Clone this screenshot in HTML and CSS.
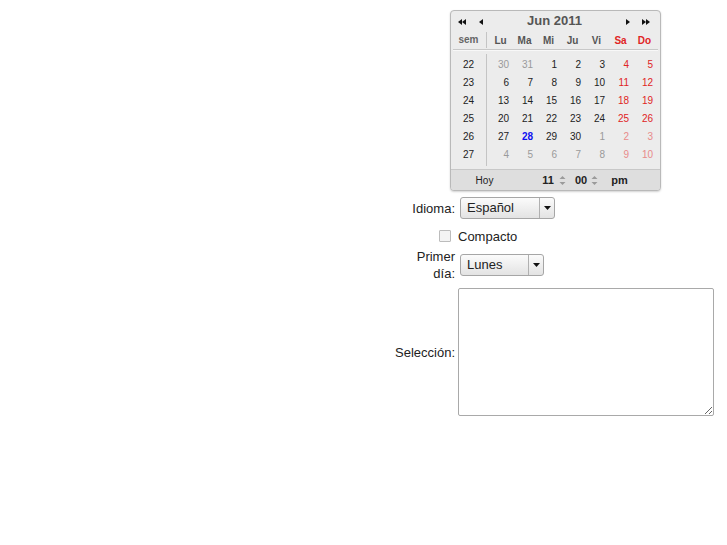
FILE: index.html
```html
<!DOCTYPE html>
<html lang="es">
<head>
<meta charset="utf-8">
<title>Calendario</title>
<link rel="stylesheet" href="styles.css">
</head>
<body>
<div class="form">
  <div class="cal">
    <div class="cal-title">
      <span class="nav nav-dbl"><svg width="8" height="6" viewBox="0 0 8 6"><polygon points="4,0 0,3 4,6" /><polygon points="8,0 4,3 8,6" /></svg></span>
      <span class="nav nav-prev"><svg width="4" height="6" viewBox="0 0 4 6"><polygon points="4,0 0,3 4,6" /></svg></span>
      <span class="title">Jun 2011</span>
      <span class="nav nav-next"><svg width="4" height="6" viewBox="0 0 4 6"><polygon points="0,0 4,3 0,6" /></svg></span>
      <span class="nav nav-dbl2"><svg width="8" height="6" viewBox="0 0 8 6"><polygon points="0,0 4,3 0,6" /><polygon points="4,0 8,3 4,6" /></svg></span>
    </div>
    <div class="cal-days">
      <span class="wk-h">sem</span>
      <span class="dn">Lu</span><span class="dn">Ma</span><span class="dn">Mi</span><span class="dn">Ju</span><span class="dn">Vi</span><span class="dn we">Sa</span><span class="dn we">Do</span>
    </div>
    <div class="cal-sep"></div>
    <div class="cal-body">
      <div class="wk-col">
        <span>22</span><span>23</span><span>24</span><span>25</span><span>26</span><span>27</span>
      </div>
      <div class="dates">
        <span class="o">30</span><span class="o">31</span><span>1</span><span>2</span><span>3</span><span class="we">4</span><span class="we">5</span>
        <span>6</span><span>7</span><span>8</span><span>9</span><span>10</span><span class="we">11</span><span class="we">12</span>
        <span>13</span><span>14</span><span>15</span><span>16</span><span>17</span><span class="we">18</span><span class="we">19</span>
        <span>20</span><span>21</span><span>22</span><span>23</span><span>24</span><span class="we">25</span><span class="we">26</span>
        <span>27</span><span class="today">28</span><span>29</span><span>30</span><span class="o">1</span><span class="o we">2</span><span class="o we">3</span>
        <span class="o">4</span><span class="o">5</span><span class="o">6</span><span class="o">7</span><span class="o">8</span><span class="o we">9</span><span class="o we">10</span>
      </div>
    </div>
    <div class="cal-foot">
      <span class="hoy">Hoy</span>
      <span class="t-hour">11</span>
      <span class="spin spin-h"><svg width="7" height="11" viewBox="0 0 7 11"><polygon points="0.5,4 3.5,1 6.5,4" /><polygon points="0.5,7 3.5,10 6.5,7" /></svg></span>
      <span class="t-min">00</span>
      <span class="spin spin-m"><svg width="7" height="11" viewBox="0 0 7 11"><polygon points="0.5,4 3.5,1 6.5,4" /><polygon points="0.5,7 3.5,10 6.5,7" /></svg></span>
      <span class="t-ampm">pm</span>
    </div>
  </div>

  <label class="lbl">Idioma:</label>
  <div class="ctl">
    <div class="combo combo-lang"><span class="combo-val">Español</span><span class="combo-btn"><svg width="7" height="4" viewBox="0 0 7 4"><polygon points="0,0 7,0 3.5,4" /></svg></span></div>
  </div>

  <div class="lbl"><input type="checkbox" class="chk" id="compacto"></div>
  <label class="ctl chk-lbl" for="compacto">Compacto</label>

  <label class="lbl lbl-wrap">Primer día:</label>
  <div class="ctl">
    <div class="combo combo-day"><span class="combo-val">Lunes</span><span class="combo-btn"><svg width="7" height="4" viewBox="0 0 7 4"><polygon points="0,0 7,0 3.5,4" /></svg></span></div>
  </div>

  <label class="lbl">Selección:</label>
  <div class="ctl"><textarea class="sel"></textarea></div>
</div>
</body>
</html>
```

FILE: styles.css
```css
body {
  margin: 8px;
  background: #ffffff;
  font-family: "Liberation Sans", Arial, sans-serif;
  font-size: 13px;
  color: #222;
}

.form {
  display: grid;
  grid-template-columns: 62px 258px;
  grid-template-rows: 184px 32px 24px 34px 140px;
  column-gap: 3px;
  align-items: center;
  width: 323px;
  margin-left: auto;
  margin-right: 3px;
}

/* ---------- calendar ---------- */
.cal {
  grid-column: 1 / -1;
  align-self: start;
  justify-self: center;
  margin: 2px 0 0 2px;
  width: 211px;
  box-sizing: border-box;
  border: 1px solid #b9b9b9;
  border-radius: 4px;
  background: #ececec;
  box-shadow: 0 1px 2px rgba(0, 0, 0, 0.18);
  overflow: hidden;
  font-size: 10px;
  color: #222;
}

.cal-title {
  display: flex;
  align-items: center;
  height: 19px;
  padding: 0 10px 0 7px;
}

.nav {
  display: flex;
  align-items: center;
  padding-top: 3px;
}
.nav svg { fill: #111; display: block; }
.nav-prev { margin-left: 13px; }
.nav-dbl2 { margin-left: 12px; }

.title {
  flex: 1;
  text-align: center;
  font-size: 13px;
  font-weight: bold;
  color: #555;
}

.cal-days {
  display: flex;
  align-items: center;
  height: 19px;
  padding-top: 1px;
  box-sizing: border-box;
  font-weight: bold;
  color: #555;
}

.wk-h {
  width: 35px;
  height: 16px;
  line-height: 16px;
  text-align: center;
  border-right: 1px solid #c4c4c4;
  color: #666;
}

.dn {
  width: 24px;
  text-align: center;
  padding-left: 3px;
  box-sizing: border-box;
}

.we { color: #e02424; }

.cal-sep {
  height: 1px;
  margin: 0 2px 0 2px;
  background: #c8c8c8;
  border-bottom: 1px solid #f8f8f8;
}

.cal-body {
  display: flex;
  padding-top: 3px;
}

.wk-col {
  width: 35px;
  display: grid;
  grid-auto-rows: 18px;
  align-items: center;
  text-align: center;
  border-right: 1px solid #c4c4c4;
  padding: 1px 0 3px;
  margin-bottom: 3px;
  color: #222;
}

.dates {
  display: grid;
  grid-template-columns: repeat(7, 24px);
  grid-auto-rows: 18px;
  align-items: center;
  padding-top: 1px;
}

.dates span {
  text-align: right;
  padding-right: 2px;
}

.dates .o { color: #9a9a9a; }
.dates .we { color: #e02424; }
.dates .o.we { color: #e88a8a; }
.dates .today { color: #1010f0; font-weight: bold; }

.cal-foot {
  display: flex;
  align-items: center;
  height: 20px;
  border-top: 1px solid #c8c8c8;
  background: #dedede;
  font-size: 11px;
  color: #222;
}

.hoy {
  width: 67px;
  text-align: center;
  font-size: 10px;
}

.t-hour {
  width: 36px;
  text-align: right;
  font-weight: bold;
}

.t-min, .t-ampm { font-weight: bold; }

.spin { display: flex; align-items: center; }
.spin svg { fill: #9a9a9a; display: block; }
.spin-h { margin-left: 5px; }
.t-min { margin-left: 9px; }
.spin-m { margin-left: 4px; }
.t-ampm { margin-left: 13px; }

/* ---------- form rows ---------- */
.lbl {
  text-align: right;
  color: #222;
}

.lbl-wrap { line-height: 17px; }

.ctl { color: #222; }

.combo {
  display: flex;
  height: 22px;
  margin-left: 2px;
  box-sizing: border-box;
  border: 1px solid #a6a6a6;
  border-radius: 3px;
  background: linear-gradient(#fbfbfb, #e3e3e3);
  overflow: hidden;
}

.combo-lang { width: 95px; }
.combo-day { width: 84px; }

.combo-val {
  flex: 1;
  padding-left: 6px;
  line-height: 20px;
  font-size: 13px;
  color: #222;
}

.combo-btn {
  width: 14px;
  border-left: 1px solid #b0b0b0;
  display: flex;
  align-items: center;
  justify-content: center;
}
.combo-btn svg { fill: #111; display: block; }

.chk {
  appearance: none;
  -webkit-appearance: none;
  width: 12px;
  height: 12px;
  margin: 0 4px 0 0;
  box-sizing: border-box;
  border: 1px solid #bcbcbc;
  border-radius: 1px;
  background: #f3f3f3;
  vertical-align: middle;
  position: relative;
  top: -1px;
}

.chk-lbl { line-height: 15px; }

.sel {
  display: block;
  width: 256px;
  height: 128px;
  margin: 0;
  box-sizing: border-box;
  border: 1px solid #a9a9a9;
  border-radius: 2px;
  background: #fff;
  font-family: "Liberation Sans", Arial, sans-serif;
  font-size: 13px;
}
```
